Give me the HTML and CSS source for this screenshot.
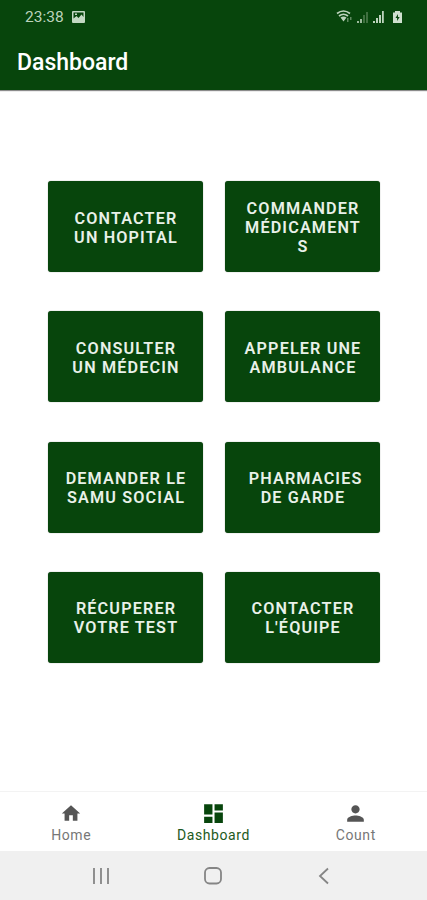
FILE: index.html
```
<!DOCTYPE html>
<html lang="fr">
<head>
    <meta charset="UTF-8">
    <title>Dashboard</title>
    <link rel="stylesheet" href="styles.css">
</head>
<body>
    <div class="status-bar">
        <span class="time">23:38</span>
        <svg class="picture" width="13" height="12" viewBox="0 0 13 12">
            <path fill="#c3d8c3" fill-rule="evenodd" d="M1 0h11q1 0 1 1v10q0 1-1 1H1q-1 0-1-1V1q0-1 1-1zM1.500 1.500v6l3-2.500 2 2 3-3.500 2 2.500V1.500zM3 2.500h2v1.500H3z"/>
        </svg>
        <svg class="signals" width="68" height="16" viewBox="0 0 68 16">
            <g fill="none" stroke="#bcd3bc" stroke-width="1.700">
                <path d="M1 4.500q6.500-5 13 0M3 7q4.500-3.500 9 0"/>
            </g>
            <path fill="#bcd3bc" d="M4.500 8.500q3-2 6 0l-3 4z"/>
            <path fill="#5f8a60" d="M11 9h1.500v4H11zM14 8h1.500v3H14z"/>
            <path fill="#9dbb9d" d="M21 12h2v2h-2zM24 10h2v4h-2z"/>
            <path fill="#3f7040" d="M27 6h2v8h-2zM30 3h2v11h-2z"/>
            <path fill="#bcd3bc" d="M37 12h2v2h-2zM40 9h2v5h-2zM43 6h2v8h-2zM46 2h1.800v12H46z"/>
            <path fill="#cfe0cf" fill-rule="evenodd" d="M59 2h5v1.500h2V14h-9V3.500h2zM62 5L59.500 9h1.600v3L63.700 8h-1.700z"/>
        </svg>
    </div>
    <header class="app-bar">Dashboard</header>

    <main class="content">
        <button class="tile">CONTACTER<br>UN HOPITAL</button>
        <button class="tile">COMMANDER<br>MÉDICAMENT<br>S</button>
        <button class="tile">CONSULTER<br>UN MÉDECIN</button>
        <button class="tile">APPELER UNE<br>AMBULANCE</button>
        <button class="tile">DEMANDER LE<br>SAMU SOCIAL</button>
        <button class="tile">&nbsp;PHARMACIES<br>DE GARDE</button>
        <button class="tile">RÉCUPERER<br>VOTRE TEST</button>
        <button class="tile">CONTACTER<br>L'ÉQUIPE</button>
    </main>

    <nav class="tabs">
        <a class="tab">
            <svg width="22" height="22" viewBox="0 0 24 24"><path d="M10 20v-6h4v6h5v-8h3L12 3 2 12h3v8z"/></svg>
            <span>Home</span>
        </a>
        <a class="tab active">
            <svg width="25" height="25" viewBox="0 0 24 24"><path d="M3 13h8V3H3v10zm0 8h8v-6H3v6zm10 0h8V11h-8v10zm0-18v6h8V3h-8z"/></svg>
            <span>Dashboard</span>
        </a>
        <a class="tab">
            <svg width="25" height="25" viewBox="0 0 24 24"><path d="M12 12c2.210 0 4-1.790 4-4s-1.790-4-4-4-4 1.790-4 4 1.790 4 4 4zm0 2c-2.670 0-8 1.340-8 4v2h16v-2c0-2.660-5.330-4-8-4z"/></svg>
            <span>Count</span>
        </a>
    </nav>

    <div class="system-nav">
        <svg width="18" height="18" viewBox="0 0 18 18"><path d="M2 1v16M9 1v16M16 1v16"/></svg>
        <svg width="18" height="18" viewBox="0 0 18 18"><rect x="1" y="1" width="16" height="15.500" rx="4.500"/></svg>
        <svg width="18" height="18" viewBox="0 0 18 18"><path d="M13 1.500L5 9l8 7.500"/></svg>
    </div>
</body>
</html>
```

FILE: styles.css
```
body {
    font-family: Roboto, sans-serif;
    background: #fff;
    margin: 0;
    height: 900px;
    display: flex;
    flex-direction: column;
    overflow: hidden;
}

.status-bar {
    display: flex;
    align-items: center;
    height: 34px;
    padding: 0 23px 0 25px;
    background: #07450c;
    color: #bcd3bc;
}

.time {
    font-size: 15.5px;
}

.picture {
    margin-left: 8px;
}

.signals {
    margin-left: auto;
}

.app-bar {
    height: 56px;
    line-height: 58px;
    padding-left: 17px;
    background: #07450c;
    box-shadow: 0 1px 1px rgba(0, 0, 0, 0.45);
    color: #fff;
    font-size: 23px;
    font-weight: 500;
}

.content {
    flex: 1;
    display: grid;
    grid-template-columns: 155px 155px;
    grid-auto-rows: 91px;
    align-content: start;
    gap: 39.3px 22px;
    padding: 91px 0 0 48px;
}

.tile {
    padding: 2px 0 0 1px;
    border: none;
    border-radius: 3px;
    background: #07450c;
    box-shadow: 0 0 1px rgba(0, 30, 0, 0.6);
    color: #e9f1e9;
    font-family: inherit;
    font-size: 16.2px;
    font-weight: 600;
    line-height: 19px;
    letter-spacing: 1.15px;
}

.tabs {
    display: flex;
    height: 59px;
    border-top: 1px solid #f3f3f3;
}

.tab {
    flex: 1;
    display: flex;
    flex-direction: column;
    align-items: center;
    color: #777;
    font-size: 14px;
    letter-spacing: 0.6px;
}

.tab svg {
    height: 25px;
    margin-top: 9px;
    fill: #555;
}

.tab span {
    line-height: 19px;
}

.active {
    color: #1d5a22;
}

.active svg {
    fill: #07450c;
}

.system-nav {
    display: flex;
    justify-content: space-between;
    align-items: center;
    height: 49px;
    padding: 1px 94px 0 92px;
    box-sizing: border-box;
    background: #f0f0f0;
}

.system-nav svg {
    fill: none;
    stroke: #858585;
    stroke-width: 1.8;
}
```
